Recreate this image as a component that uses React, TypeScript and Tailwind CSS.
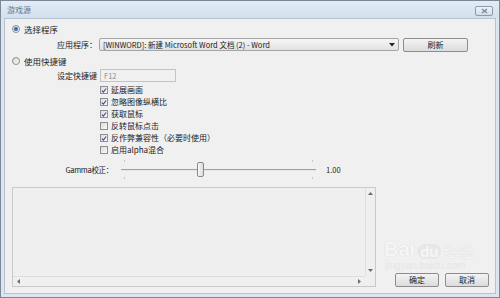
import React from "react";

const font = { fontFamily: '"Noto Sans CJK SC", "Liberation Sans", sans-serif' };

function Radio({ checked }: { checked?: boolean }) {
    return (
        <span className="w-[8px] h-[8px] rounded-full border border-[#8e8f8f] bg-gradient-to-br from-[#d6d6d6] to-[#fbfbfb] flex items-center justify-center shrink-0">
            {checked && <span className="w-[4px] h-[4px] rounded-full bg-[#2f6fb4]" />}
        </span>
    );
}

function Check({ checked }: { checked?: boolean }) {
    return (
        <span className="w-[8px] h-[8px] border border-[#8e8f8f] bg-gradient-to-br from-[#dcdcdc] to-[#fafafa] flex items-center justify-center shrink-0">
            {checked && (
                <svg width="7" height="7" viewBox="0 0 7 7">
                    <path d="M1 3.6 L2.8 5.4 L6 1.2" stroke="#3a4f8a" strokeWidth="1.3" fill="none" />
                </svg>
            )}
        </span>
    );
}

function Button({ label, className }: { label: string; className: string }) {
    return (
        <div className={"h-[14px] border border-[#8d8d8d] rounded-[2px] bg-gradient-to-b from-[#f3f3f3] to-[#dcdcdc] flex items-center justify-center text-[8px] text-[#222] " + className}>
            {label}
        </div>
    );
}

const options = [
    { label: "延展画面", checked: true },
    { label: "忽略图像纵横比", checked: true },
    { label: "获取鼠标", checked: true },
    { label: "反转鼠标点击", checked: false },
    { label: "反作弊兼容性（必要时使用）", checked: true },
    { label: "启用alpha混合", checked: false },
];

export default function App() {
    return (
        <div className="w-[500px] h-[298px] border border-[#7d8896] bg-[#dbe6f2] flex flex-col relative overflow-hidden" style={font}>
            {/* title bar */}
            <div className="h-[17px] flex items-center justify-between px-[6px] bg-gradient-to-b from-[#e3ecf6] to-[#d3e0ee]">
                <span className="text-[8px] text-[#6b7683] leading-none">游戏源</span>
                <div className="mt-[2px] w-[18px] h-[10px] border border-[#8e9aa8] rounded-[2px] bg-gradient-to-b from-[#eef3f9] to-[#d2dce8] flex items-center justify-center">
                    <svg width="7" height="6" viewBox="0 0 7 6">
                        <path d="M1 1 L6 5 M6 1 L1 5" stroke="#7f8996" strokeWidth="1.4" />
                    </svg>
                </div>
            </div>

            {/* client area */}
            <div className="mx-[3px] h-[276px] bg-[#f0f0f0] border border-[#b6c2d0] text-[8px] text-[#1a1a1a] flex flex-col">
                <div className="h-[19px] flex items-center gap-[4px] pl-[7px] pt-[1px]">
                    <Radio checked />
                    <span className="text-[8.5px]">选择程序</span>
                </div>

                <div className="h-[13px] flex items-center">
                    <span className="w-[94px] text-right pr-[2px]">应用程序：</span>
                    <div className="w-[300px] h-[13px] border border-[#a5a5a5] rounded-[2px] bg-gradient-to-b from-[#f6f6f6] to-[#e2e2e2] flex items-center justify-between px-[3px]">
                        <span className="text-[7.5px] text-[#222]">[WINWORD]: 新建 Microsoft Word 文档 (2) - Word</span>
                        <svg width="6" height="4" viewBox="0 0 6 4">
                            <path d="M0 0 L6 0 L3 3.5 Z" fill="#222" />
                        </svg>
                    </div>
                    <Button label="刷新" className="ml-[4px] w-[65px] h-[13px]" />
                </div>

                <div className="h-[18px] flex items-center gap-[4px] pl-[7px] pt-[2px]">
                    <Radio />
                    <span className="text-[8.5px]">使用快捷键</span>
                </div>

                <div className="h-[13px] flex items-center mb-[2px]">
                    <span className="w-[95px] text-right pr-[3px]">设定快捷键</span>
                    <div className="w-[76px] h-[13px] border border-[#c3c3c3] bg-[#f0f0f0] flex items-center px-[3px] text-[7.5px] text-[#8d8d8d]">
                        F12
                    </div>
                </div>

                <div className="flex flex-col pl-[95px]">
                    {options.map(o => (
                        <div key={o.label} className="h-[12px] flex items-center gap-[3px]">
                            <Check checked={o.checked} />
                            <span className="leading-none">{o.label}</span>
                        </div>
                    ))}
                </div>

                <div className="h-[19px] mt-[4px] flex items-center">
                    <span className="w-[112px] text-right pr-[4px] text-[7.5px] tracking-[-0.3px]">Gamma校正：</span>
                    <div className="relative ml-[4px] w-[195px] h-[19px] flex items-center">
                        <div className="w-full h-[2px] border-t border-[#a0a0a0] bg-[#e6e6e6]" />
                        <span className="absolute left-[3px] top-0 w-[1px] h-[2px] bg-[#c6c6c6]" />
                        <span className="absolute left-[3px] bottom-0 w-[1px] h-[2px] bg-[#c6c6c6]" />
                        <span className="absolute right-[3px] top-0 w-[1px] h-[2px] bg-[#c6c6c6]" />
                        <span className="absolute right-[3px] bottom-0 w-[1px] h-[2px] bg-[#c6c6c6]" />
                        <span className="absolute left-[76px] top-[2px] w-[7px] h-[15px] rounded-[2px] border border-[#8a8a8a] bg-gradient-to-r from-[#f8f8f8] to-[#dadada]" />
                    </div>
                    <span className="ml-[10px] text-[7.5px] text-[#222]">1.00</span>
                </div>

                <div className="flex flex-1 items-end pl-[7px] pb-[6px] pt-[8px]">
                    <div className="w-[364px] h-full border border-[#c9c9c9] bg-[#efefef] flex flex-col">
                        <div className="flex flex-1">
                            <div className="flex-1" />
                            <div className="w-[10px] border-l border-[#dedede] flex flex-col justify-between items-center py-[4px]">
                                <svg width="5" height="3" viewBox="0 0 5 3"><path d="M0 3 L2.5 0 L5 3 Z" fill="#6d6d6d" /></svg>
                                <svg width="5" height="3" viewBox="0 0 5 3"><path d="M0 0 L2.5 3 L5 0 Z" fill="#6d6d6d" /></svg>
                            </div>
                        </div>
                        <div className="h-[10px] border-t border-[#dedede] flex items-center justify-between px-[4px] mr-[10px]">
                            <svg width="3" height="5" viewBox="0 0 3 5"><path d="M3 0 L0 2.5 L3 5 Z" fill="#6d6d6d" /></svg>
                            <svg width="3" height="5" viewBox="0 0 3 5"><path d="M0 0 L3 2.5 L0 5 Z" fill="#6d6d6d" /></svg>
                        </div>
                    </div>
                    <div className="flex gap-[6px] ml-[19px]">
                        <Button label="确定" className="w-[44px]" />
                        <Button label="取消" className="w-[44px]" />
                    </div>
                </div>
            </div>

            {/* watermark */}
            <div className="absolute left-[383px] top-[238px] flex flex-col items-start pointer-events-none opacity-80">
                <div className="flex items-end gap-[2px] text-white" style={{ fontFamily: '"Liberation Sans", "Noto Sans CJK SC", sans-serif' }}>
                    <span className="text-[20px] font-bold leading-none text-[#f7f7f7] [text-shadow:0_0_1px_#c8c8c8]">Bai</span>
                    <span className="text-[15px] font-bold leading-none px-[3px] rounded-full bg-[#e6e6e6] text-[#f7f7f7]">du</span>
                    <span className="text-[15px] leading-none text-[#f7f7f7] [text-shadow:0_0_1px_#c8c8c8]">经验</span>
                </div>
                <span className="text-[10px] text-[#e4e4e4] leading-none mt-[2px] ml-[1px]" style={{ fontFamily: '"Liberation Sans", sans-serif' }}>jingyan.baidu.com</span>
            </div>
        </div>
    );
}
